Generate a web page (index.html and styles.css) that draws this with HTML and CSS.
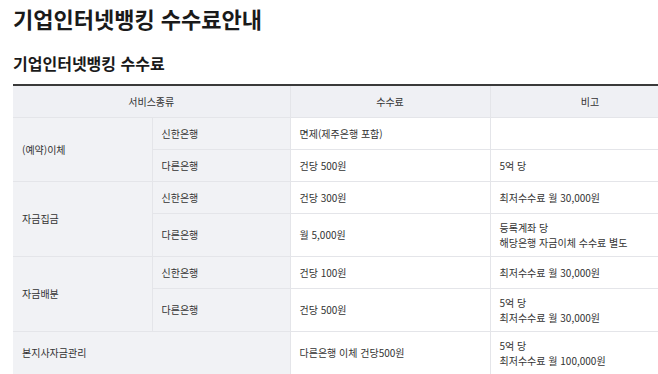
FILE: index.html
```html
<!DOCTYPE html>
<html lang="ko">
<head>
<meta charset="utf-8">
<title>기업인터넷뱅킹 수수료안내</title>
<link rel="stylesheet" href="styles.css">
</head>
<body>
<div class="page">
  <h1 class="title">기업인터넷뱅킹 수수료안내</h1>
  <h2 class="subtitle">기업인터넷뱅킹 수수료</h2>
  <table class="fee-table">
    <colgroup>
      <col class="c1"><col class="c2"><col class="c3"><col class="c4">
    </colgroup>
    <thead>
      <tr>
        <th colspan="2">서비스종류</th>
        <th>수수료</th>
        <th>비고</th>
      </tr>
    </thead>
    <tbody>
      <tr>
        <td class="label" rowspan="2">(예약)이체</td>
        <td class="label">신한은행</td>
        <td>면제(제주은행 포함)</td>
        <td></td>
      </tr>
      <tr>
        <td class="label">다른은행</td>
        <td>건당 500원</td>
        <td>5억 당</td>
      </tr>
      <tr>
        <td class="label" rowspan="2">자금집금</td>
        <td class="label">신한은행</td>
        <td>건당 300원</td>
        <td>최저수수료 월 30,000원</td>
      </tr>
      <tr class="tall">
        <td class="label">다른은행</td>
        <td>월 5,000원</td>
        <td>등록계좌 당<br>해당은행 자금이체 수수료 별도</td>
      </tr>
      <tr>
        <td class="label" rowspan="2">자금배분</td>
        <td class="label">신한은행</td>
        <td>건당 100원</td>
        <td>최저수수료 월 30,000원</td>
      </tr>
      <tr class="tall">
        <td class="label">다른은행</td>
        <td>건당 500원</td>
        <td>5억 당<br>최저수수료 월 30,000원</td>
      </tr>
      <tr class="tall">
        <td class="label" colspan="2">본지사자금관리</td>
        <td>다른은행 이체 건당500원</td>
        <td>5억 당<br>최저수수료 월 100,000원</td>
      </tr>
    </tbody>
  </table>
</div>
</body>
</html>
```
FILE: styles.css
```css
html, body {
  margin: 0;
  padding: 0;
  background: #fff;
  overflow: hidden;
}
.page {
  padding: 0 0 0 13px;
  font-family: "Noto Sans CJK KR", "Noto Sans", sans-serif;
  color: #222;
  width: 700px;
}
.title {
  margin: 0;
  padding-top: 4px;
  font-size: 22px;
  line-height: 28px;
  font-weight: 700;
  color: #1a1a1a;
}
.subtitle {
  margin: 20px 0 0;
  font-size: 16px;
  line-height: 22px;
  font-weight: 700;
  color: #1a1a1a;
}
.fee-table {
  margin-top: 10px;
  border-collapse: collapse;
  table-layout: fixed;
  width: 677px;
  border-top: 2px solid #3a3a3a;
  font-size: 10px;
  color: #333;
}
.c1 { width: 139px; }
.c2 { width: 138px; }
.c3 { width: 200px; }
.c4 { width: 200px; }
.fee-table tr { height: 32px; }
.fee-table tr.tall { height: 43px; }
.fee-table th {
  padding: 0 9px;
  background: #eff0f4;
  font-weight: 400;
  text-align: center;
  border: 1px solid #e4e5e9;
  border-top: none;
  color: #333;
}
.fee-table td {
  padding: 0 9px;
  line-height: 15px;
  text-align: left;
  vertical-align: middle;
  border: 1px solid #e4e5e9;
  background: #fff;
}
.fee-table td.label {
  background: #f1f2f5;
}
.fee-table tr:first-child th:first-child,
.fee-table td:first-child { border-left: none; }
```
